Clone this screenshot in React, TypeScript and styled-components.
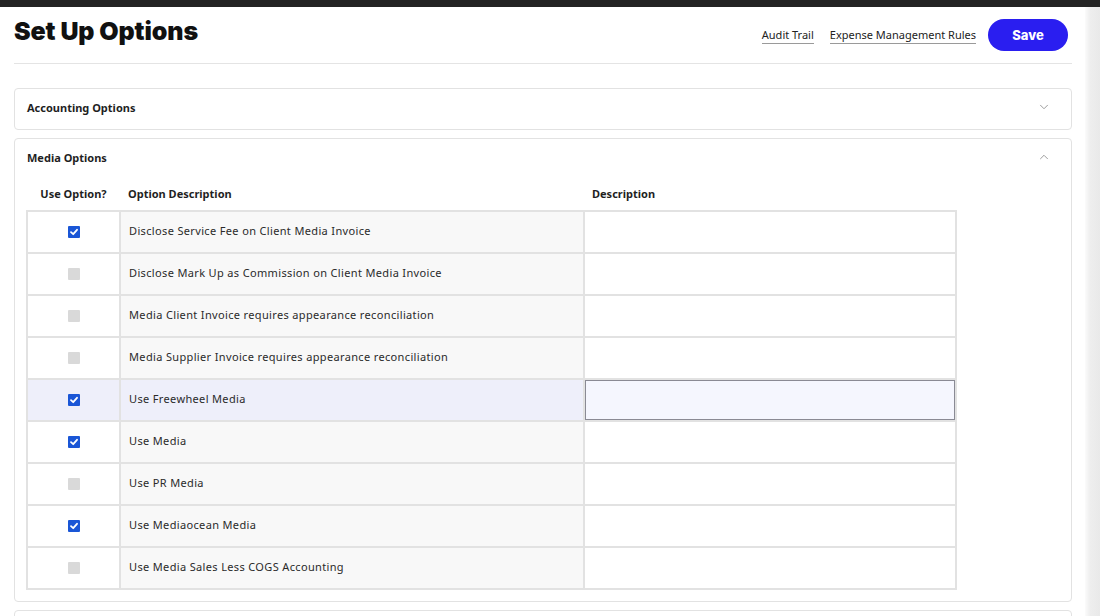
import styled, { createGlobalStyle } from "styled-components"
import { ChevronDown, ChevronUp } from "lucide-react"

type OptionRow = {
  id: number
  title: string
  checked: boolean
  active?: boolean
}

const rows: OptionRow[] = [
  { id: 1, title: "Disclose Service Fee on Client Media Invoice", checked: true },
  { id: 2, title: "Disclose Mark Up as Commission on Client Media Invoice", checked: false },
  { id: 3, title: "Media Client Invoice requires appearance reconciliation", checked: false },
  { id: 4, title: "Media Supplier Invoice requires appearance reconciliation", checked: false },
  { id: 5, title: "Use Freewheel Media", checked: true, active: true },
  { id: 6, title: "Use Media", checked: true },
  { id: 7, title: "Use PR Media", checked: false },
  { id: 8, title: "Use Mediaocean Media", checked: true },
  { id: 9, title: "Use Media Sales Less COGS Accounting", checked: false },
]

const CheckBox = ({ checked }: { checked: boolean }) => (
  <BoxStyle $checked={checked}>
    {checked && (
      <svg width="10" height="10" viewBox="0 0 10 10">
        <path d="M2 5.2 L4.2 7.2 L8 2.8" fill="none" stroke="#fff" strokeWidth="1.8" strokeLinecap="round" strokeLinejoin="round" />
      </svg>
    )}
  </BoxStyle>
)

export default function App() {
  const mappedRows = rows.map(el => (
    <tr key={el.id}>
      <CheckCell $active={el.active}>
        <CheckBox checked={el.checked} />
      </CheckCell>
      <TitleCell $active={el.active}>{el.title}</TitleCell>
      <DescCell $active={el.active}></DescCell>
    </tr>
  ))

  return (
    <>
      <GlobalStyle />
      <TopBar />
      <Page>
        <Main>
          <HeaderStyle>
            <PageTitle>Set Up Options</PageTitle>
            <Actions>
              <LinkStyle>Audit Trail</LinkStyle>
              <LinkStyle>Expense Management Rules</LinkStyle>
              <SaveButton>Save</SaveButton>
            </Actions>
          </HeaderStyle>

          <Cards>
            <Card>
              <CardHeader>
                <span>Accounting Options</span>
                <ChevronDown size={14} strokeWidth={1.5} color="#8f8f8f" />
              </CardHeader>
            </Card>

            <Card>
              <CardHeader>
                <span>Media Options</span>
                <ChevronUp size={14} strokeWidth={1.5} color="#8f8f8f" />
              </CardHeader>
              <TableWrap>
                <TableStyle>
                  <colgroup>
                    <col style={{ width: 93 }} />
                    <col style={{ width: 464 }} />
                    <col style={{ width: 372 }} />
                  </colgroup>
                  <thead>
                    <tr>
                      <HeadCell $center>Use Option?</HeadCell>
                      <HeadCell>Option Description</HeadCell>
                      <HeadCell>Description</HeadCell>
                    </tr>
                  </thead>
                  <tbody>{mappedRows}</tbody>
                </TableStyle>
              </TableWrap>
            </Card>

            <Card />
          </Cards>
        </Main>
        <ScrollTrack />
      </Page>
    </>
  )
}

const GlobalStyle = createGlobalStyle`
  html, body {
    margin: 0;
    padding: 0;
    background: #fff;
    overflow: hidden;
  }
  body {
    font-family: Roboto, "Noto Sans", sans-serif;
    color: #2b2b2b;
  }
`

const TopBar = styled.div`
  height: 7px;
  background-color: #232323;
`

const Page = styled.div`
  display: flex;
  height: 609px;
`

const Main = styled.div`
  flex: 1;
  padding: 0 13px 0 14px;
`

const ScrollTrack = styled.div`
  width: 15px;
  background: linear-gradient(to right, #fbfbfb, #eeeeee 35%, #e9e9e9);
`

const HeaderStyle = styled.div`
  display: flex;
  align-items: center;
  justify-content: space-between;
  height: 56px;
  border-bottom: 1px solid #e4e4e4;
`

const PageTitle = styled.h1`
  margin: -8px 0 0;
  font-family: Inter, sans-serif;
  font-size: 25px;
  font-weight: 900;
  letter-spacing: -0.1px;
  color: #111;
`

const Actions = styled.div`
  display: flex;
  align-items: center;
  gap: 16px;
  margin-right: 4px;
`

const LinkStyle = styled.a`
  font-family: "Noto Sans", sans-serif;
  font-size: 11px;
  color: #222;
  padding-bottom: 1px;
  border-bottom: 1px solid #9a9a9a;
  cursor: pointer;
  &:last-of-type {
    margin-right: -4px;
  }
`

const SaveButton = styled.button`
  width: 80px;
  height: 32px;
  border: none;
  border-radius: 16px;
  background-color: #2a1ef0;
  color: #fff;
  font-family: Inter, sans-serif;
  font-size: 13px;
  font-weight: 800;
  cursor: pointer;
`

const Cards = styled.div`
  display: flex;
  flex-direction: column;
  gap: 8px;
  margin-top: 24px;
`

const Card = styled.div`
  border: 1px solid #e2e2e2;
  border-radius: 4px;
  background: #fff;
  min-height: 30px;
`

const CardHeader = styled.div`
  display: flex;
  align-items: center;
  justify-content: space-between;
  height: 36px;
  padding: 0 20px 4px 12px;
  font-family: "Noto Sans", sans-serif;
  font-size: 11px;
  font-weight: 700;
  color: #1f1f1f;
`

const TableWrap = styled.div`
  padding: 0 0 11px 11px;
`

const TableStyle = styled.table`
  border-collapse: collapse;
  table-layout: fixed;
  width: 929px;
`

const HeadCell = styled.th<{ $center?: boolean }>`
  height: 28px;
  padding: 0 8px 3px;
  text-align: ${p => (p.$center ? "center" : "left")};
  font-family: "Noto Sans", sans-serif;
  font-size: 11px;
  font-weight: 700;
  color: #1f1f1f;
`

const CheckCell = styled.td<{ $active?: boolean }>`
  height: 37px;
  padding: 0 0 3px;
  text-align: center;
  vertical-align: middle;
  border: 2px solid #e2e2e2;
  background: ${p => (p.$active ? "#eeeffa" : "#fff")};
`

const TitleCell = styled.td<{ $active?: boolean }>`
  height: 37px;
  padding: 0 8px 3px;
  border: 2px solid #e2e2e2;
  background: ${p => (p.$active ? "#eeeffa" : "#f8f8f8")};
  font-family: "Noto Sans", sans-serif;
  font-size: 11px;
  letter-spacing: 0.35px;
  color: #2a2a2a;
`

const DescCell = styled.td<{ $active?: boolean }>`
  height: 37px;
  padding: 0 8px 3px;
  border: 2px solid #e2e2e2;
  background: ${p => (p.$active ? "#f5f6fe" : "#fff")};
  box-shadow: ${p => (p.$active ? "inset 0 0 0 1px #8a8a94" : "none")};
`

const BoxStyle = styled.span<{ $checked: boolean }>`
  display: inline-flex;
  align-items: center;
  justify-content: center;
  width: 12px;
  height: 12px;
  vertical-align: middle;
  border-radius: 1px;
  background-color: ${p => (p.$checked ? "#1a56d6" : "#d9d9d9")};
`
